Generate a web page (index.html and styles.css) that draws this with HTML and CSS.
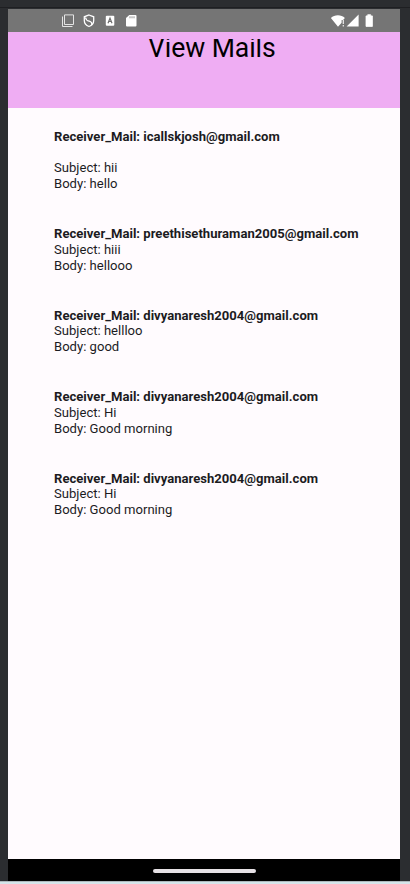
FILE: index.html
```
<!DOCTYPE html>
<html lang="en">
<head>
<meta charset="utf-8">
<title>View Mails</title>
<link rel="stylesheet" href="styles.css">
</head>
<body>
<div class="toolbar-edge"></div>
<div class="device">
  <div class="status">
    <svg class="notifications" width="78" height="14" viewBox="0 0 78 14">
      <g fill="none" stroke="#e4e4e4" stroke-width="1">
        <path d="M3.500 .9h9v9.600h-9z"/>
        <path d="M1.500 2.500v10h10"/>
      </g>
      <g fill="none" stroke="#fff" stroke-width="1.300">
        <path d="M28 1l4.700 1.800v3.800c0 2.700-1.800 4.900-4.700 5.900-2.900-1-4.700-3.200-4.700-5.900V2.800z"/>
        <path d="M24.500 3.500c.5 3 2 3.300 3.700 3.700s3 1.800 2.500 4"/>
      </g>
      <rect x="44.800" y="1.700" width="8.500" height="10" rx="1" fill="#fff"/>
      <path d="M47 9.200l2-5 2 5M47.800 7.500h2.600" fill="none" stroke="#6d6d6d" stroke-width="1.200"/>
      <path d="M68.300 .9h6.200a1 1 0 0 1 1 1v9.600a1 1 0 0 1-1 1h-8.500a1 1 0 0 1-1-1v-7.400z" fill="#fff"/>
      <path d="M69 2.300v2M71 2.300v2M73 2.300v2" stroke="#777" stroke-width=".8"/>
    </svg>
    <svg class="system" width="44" height="14" viewBox="0 0 44 14">
      <path d="M.9 4C4.400 .3 11.400 .3 14.900 4l-1.800 2h-1.500v2.800L8 12.700z" fill="#fff"/>
      <path d="M13.300 6v4M13.300 11v1.500" stroke="#eee" stroke-width="1.200"/>
      <path d="M28.600 .6v12H16.600z" fill="#fff"/>
      <path d="M36 1.900h1.700V.7h3v1.200h1.700v10.500H36z" fill="#fff" stroke="#fff" stroke-width=".8" stroke-linejoin="round"/>
    </svg>
  </div>
  <header class="header"><h1 class="title"><span>View Mails</span></h1></header>
  <main class="mails">
    <article class="mail">
      <p class="receiver first">Receiver_Mail: icallskjosh@gmail.com</p>
      <p>Subject: hii</p>
      <p>Body: hello</p>
    </article>
    <article class="mail">
      <p class="receiver">Receiver_Mail: preethisethuraman2005@gmail.com</p>
      <p>Subject: hiii</p>
      <p>Body: hellooo</p>
    </article>
    <article class="mail">
      <p class="receiver">Receiver_Mail: divyanaresh2004@gmail.com</p>
      <p>Subject: hellloo</p>
      <p>Body: good</p>
    </article>
    <article class="mail">
      <p class="receiver">Receiver_Mail: divyanaresh2004@gmail.com</p>
      <p>Subject: Hi</p>
      <p>Body: Good morning</p>
    </article>
    <article class="mail">
      <p class="receiver">Receiver_Mail: divyanaresh2004@gmail.com</p>
      <p>Subject: Hi</p>
      <p>Body: Good morning</p>
    </article>
  </main>
  <nav class="gesture"><div class="handle"></div></nav>
</div>
<div class="window-edge"></div>
</body>
</html>
```
FILE: styles.css
```
* { box-sizing: border-box; }
body {
  margin: 0;
  height: 884px;
  display: flex;
  flex-direction: column;
  background: #2b2d30;
  font-family: Roboto, sans-serif;
  color: #1c1b1f;
  overflow: hidden;
}
.toolbar-edge { height: 9px; border-bottom: 1px solid #2b2d30; box-shadow: inset 0 -1px #1e1f22; flex: none; }
.device {
  width: 392px;
  height: 872px;
  margin-left: 8px;
  display: flex;
  flex-direction: column;
  background: #fffbfe;
}
.status {
  height: 23px;
  background: #757575;
  display: flex;
  justify-content: space-between;
  padding: 5px 26px 0 53px;
}
.header {
  height: 76px;
  background: #efadf3;
  padding-top: 7px;
}
.title {
  margin: 0 0 0 140px;
  height: 32px;
  overflow: hidden;
  font-size: 26.6px;
  font-weight: 400;
  line-height: 18px;
  letter-spacing: -0.08px;
  color: #000;
  white-space: nowrap;
}
.title span { display: inline-block; transform: scaleY(1.03); transform-origin: 0 80%; }
.mails {
  flex: 1;
  padding: 21.1px 0 0 46px;
  font-size: 13.08px;
  line-height: 15.65px;
}
.mail { margin-bottom: 34.55px; }
.mail p { margin: 0; white-space: nowrap; transform: scaleY(1.04); transform-origin: 0 80%; }
.mail .receiver { font-weight: 700; }
.mail .first { margin-bottom: 15.65px; }
.gesture {
  height: 22px;
  background: #000;
  display: flex;
  justify-content: center;
  padding-top: 10px;
}
.handle { width: 103px; height: 4px; border-radius: 2px; background: #e6e1e5; }
.window-edge { height: 3px; background: #d5e5ea; border-top: 1px solid #adb8bc; flex: none; }
```
